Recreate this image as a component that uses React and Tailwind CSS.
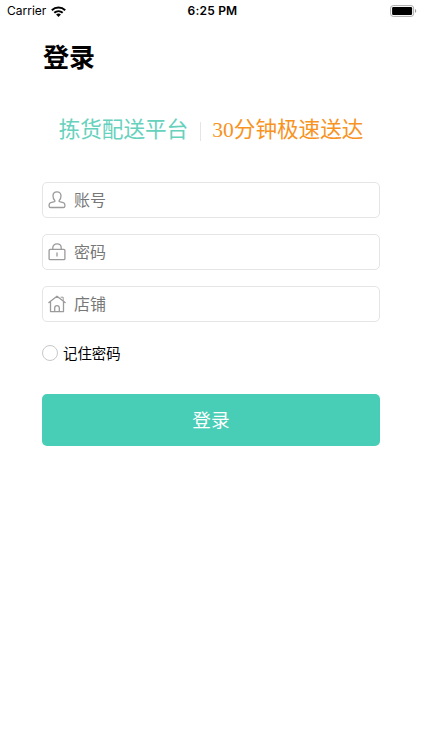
import React from 'react';

const iconProps = {
  width: 18,
  height: 18,
  viewBox: '0 0 18 18',
  fill: 'none',
  stroke: '#9b9b9b',
  strokeWidth: 1.3,
  strokeLinejoin: 'round',
  strokeLinecap: 'round',
};

function UserIcon() {
  return (
    <svg {...iconProps}>
      <path d="M9 .9C6.6.9 5 2.5 5 4.9c0 1.9.7 3.6 1.8 4.6.3.5.1.9-.4 1.1L2.8 11.7C1.6 12.1 1.1 12.8 1.1 13.9v1c0 1 .6 1.6 1.6 1.6h12.6c1 0 1.6-.6 1.6-1.6v-1c0-1.1-.5-1.8-1.7-2.2l-3.6-1.1c-.5-.2-.7-.6-.4-1.1C12.3 8.500 13 6.800 13 4.900 13 2.500 11.400.9 9 .9Z" />
    </svg>
  );
}

function LockIcon() {
  return (
    <svg {...iconProps}>
      <rect x="1.1" y="6.400" width="15.8" height="10.300" rx="1" />
      <path d="M4.800 6.300V4.800C4.800 2.400 6.500.9 9 .9s4.200 1.500 4.200 3.900v1.500M9 10v3" />
    </svg>
  );
}

function ShopIcon() {
  return (
    <svg {...iconProps}>
      <path d="M.9 7.600 9 1.200l8.100 6.400M2.500 6.600v10h13v-10" />
      <path d="M13 2.200h2.200v3.300" strokeWidth="1" />
      <path d="M6.700 16.400v-3.300c0-1.500.9-2.400 2.300-2.400s2.300.9 2.300 2.400v3.300" />
    </svg>
  );
}

function Field({ icon, label }) {
  return (
    <div className="flex h-9 items-center rounded-[5px] border border-[#e5e5e5] pl-[5px]">
      {icon}
      <span className="ml-2 text-[16px] leading-[17px] text-[#777777]">{label}</span>
    </div>
  );
}

function StatusBar() {
  return (
    <header className="grid h-[22px] grid-cols-3 items-center pl-[7px] pr-[5px] font-['Inter','Liberation_Sans',sans-serif] text-black">
      <div className="flex items-center gap-[5px]">
        <span className="text-[12px] leading-none">Carrier</span>
        <svg width="15" height="11" viewBox="0 0 15 11" fill="none" stroke="#000" strokeWidth="2">
          <path d="M.8 4.200C4.600.7 10.400.7 14.200 4.200M3.300 6.800c2.400-2.200 6-2.200 8.400 0" />
          <path d="M7.500 10.900 5.100 8.500c1.400-1.200 3.400-1.200 4.800 0Z" fill="#000" stroke="none" />
        </svg>
      </div>
      <span className="pl-px text-center text-[12px] font-semibold leading-none tracking-[0.2px]">6:25 PM</span>
      <svg className="justify-self-end" width="27" height="12" viewBox="0 0 27 12">
        <rect x=".6" y=".6" width="23" height="10.8" rx="2.6" fill="#fff" stroke="#aaa" />
        <rect x="2.1" y="2.1" width="20" height="7.8" rx="1.2" fill="#000" />
        <path d="M25 4.1c1.7.5 1.7 3.3 0 3.8Z" fill="#999" />
      </svg>
    </header>
  );
}

export default function App() {
  return (
    <div className="min-h-[750px] w-full bg-white font-['Liberation_Sans','Noto_Sans_CJK_SC',sans-serif]">
      <StatusBar />
      <main className="flex flex-col px-[42px]">
        <h1 className="mt-[23px] h-[26px] pl-px text-[26px] font-bold leading-[26px] text-black">登录</h1>
        <div className="mt-[47px] flex h-6 items-center justify-center font-['Liberation_Serif','Noto_Sans_CJK_SC',serif] text-[21.6px] leading-6">
          <span className="text-[#66d1bd]">拣货配送平台</span>
          <span className="ml-3 mr-[11px] mt-0.5 h-[19px] w-px bg-[#e5e5e5]" />
          <span className="text-[#f7931e]">30分钟极速送达</span>
        </div>
        <div className="mt-[40px] flex flex-col gap-4">
          <Field icon={<UserIcon />} label="账号" />
          <Field icon={<LockIcon />} label="密码" />
          <Field icon={<ShopIcon />} label="店铺" />
        </div>
        <label className="mt-[23px] flex h-4 items-center gap-[5px]">
          <span className="size-4 rounded-full border border-[#c8c8c8]" />
          <span className="pt-0.5 text-[14.4px] leading-none text-black">记住密码</span>
        </label>
        <button className="mt-[33px] h-[52px] rounded-[5px] bg-[#48cdb6] pt-0.5 text-[18.7px] text-white">登录</button>
      </main>
    </div>
  );
}
